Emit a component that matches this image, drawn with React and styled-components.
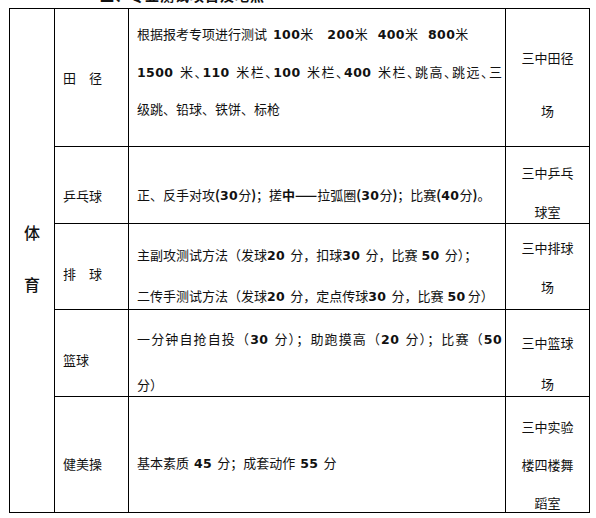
import styled, { createGlobalStyle } from 'styled-components'

const Global = createGlobalStyle`
  html, body { margin: 0; background: #fff; }
  body {
    font-family: "Noto Sans CJK SC", "Liberation Sans", sans-serif;
    color: #111;
  }
`

const Page = styled.div`
  width: 596px;
  padding-left: 9px;
  box-sizing: border-box;
`

// only the bottom edge of the section title shows above the table
const Caption = styled.div`
  height: 8px;
  overflow: hidden;
  display: flex;
  align-items: flex-end;
  padding-left: 91px;

  span {
    font-size: 14px;
    font-weight: 700;
    line-height: 14px;
    margin-bottom: 6px;
    letter-spacing: 1px;
  }
`

const Sheet = styled.div`
  display: grid;
  grid-template-columns: 44px 73px 376px 83px;
  grid-template-rows: 137px 76px 85px 86px 115px;
  gap: 1px;
  padding: 1px;
  width: max-content;
  background: #000;
`

const Cell = styled.div`
  background: #fff;
  display: flex;
  flex-direction: column;
  justify-content: center;
  box-sizing: border-box;
  font-size: 13px;
  line-height: ${p => p.$lh || 20}px;
  padding-top: ${p => Math.max(0, (p.$drop || 0) * 2)}px;
  padding-bottom: ${p => Math.max(0, -(p.$drop || 0) * 2)}px;
`

const Subject = styled(Cell)`
  grid-row: 1 / 6;
  align-items: center;
  font-size: 16px;
  font-weight: 500;
`

const Event = styled(Cell)`
  padding-left: 8px;
`

const Detail = styled(Cell)`
  padding-left: 8px;
  padding-right: 3px;
`

const Venue = styled(Cell)`
  text-align: center;
  padding-left: 14px;
  padding-right: 14px;
`

const Line = styled.div`
  white-space: ${p => (p.$fill ? 'normal' : 'nowrap')};
  text-align: ${p => (p.$fill ? 'justify' : 'left')};
  text-align-last: ${p => (p.$fill ? 'justify' : 'auto')};
  font-feature-settings: ${p => (p.$halt ? '"halt"' : 'normal')};
`

const Num = styled.span`
  font-family: "DejaVu Sans", "Liberation Sans", sans-serif;
  font-weight: 700;
  font-size: 12.5px;
  letter-spacing: 0.4px;
  margin-left: ${p => p.$l || 0}px;
  margin-right: ${p => p.$r || 0}px;
`

const Strong = styled.span`
  font-weight: 700;
`

export default function App() {
  return (
    <Page>
      <Global />
      <Caption>
        <span>二、专业测试项目及地点</span>
      </Caption>
      <Sheet>
        <Subject $lh={52} $drop={-3}>
          <div>体</div>
          <div>育</div>
        </Subject>

        <Event>田　径</Event>
        <Detail $lh={36.5} $drop={-5.5}>
          <Line>
            根据报考专项进行测试<Num $l={6}>100</Num>米<Num $l={14}>200</Num>米
            <Num $l={10}>400</Num>米<Num $l={10}>800</Num>米
          </Line>
          <Line $fill $halt>
            <Num $r={5}>1500</Num>米、<Num $r={5}>110</Num>米栏、<Num $r={5}>100</Num>米栏、
            <Num $r={5}>400</Num>米栏、跳高、跳远、三
          </Line>
          <Line>级跳、铅球、铁饼、标枪</Line>
        </Detail>
        <Venue $lh={53} $drop={6.5}>三中田径场</Venue>

        <Event $drop={10.5}>乒乓球</Event>
        <Detail $drop={10.5}>
          <Line>
            正、反手对攻<Strong>(</Strong><Num>30</Num>分<Strong>)</Strong>；搓<Strong>中——</Strong>拉弧圈
            <Strong>(</Strong><Num>30</Num>分<Strong>)</Strong>；比赛<Strong>(</Strong><Num>40</Num>分
            <Strong>)</Strong>。
          </Line>
        </Detail>
        <Venue $lh={39} $drop={7}>三中乒乓球室</Venue>

        <Event $drop={7}>排　球</Event>
        <Detail $lh={40} $drop={9}>
          <Line>
            主副攻测试方法（发球<Num $r={5}>20</Num>分，扣球<Num $r={5}>30</Num>分，比赛
            <Num $l={4} $r={5}>50</Num>分）；
          </Line>
          <Line>
            二传手测试方法（发球<Num $r={5}>20</Num>分，定点传球<Num $r={5}>30</Num>分，比赛
            <Num $l={4} $r={2}>50</Num>分）
          </Line>
        </Detail>
        <Venue $lh={39} $drop={0.5}>三中排球场</Venue>

        <Event $drop={7}>篮球</Event>
        <Detail $lh={45} $drop={8}>
          <Line $fill>
            一分钟自抢自投（<Num $r={5}>30</Num>分）；助跑摸高（<Num $r={5}>20</Num>分）；比赛（
            <Num>50</Num>
          </Line>
          <Line>分）</Line>
        </Detail>
        <Venue $lh={41} $drop={10}>三中篮球场</Venue>

        <Event $drop={9}>健美操</Event>
        <Detail $drop={9}>
          <Line>
            基本素质<Num $l={5} $r={5}>45</Num>分；成套动作<Num $l={5} $r={5}>55</Num>分
          </Line>
        </Detail>
        <Venue $lh={38} $drop={10}>三中实验楼四楼舞蹈室</Venue>
      </Sheet>
    </Page>
  )
}
